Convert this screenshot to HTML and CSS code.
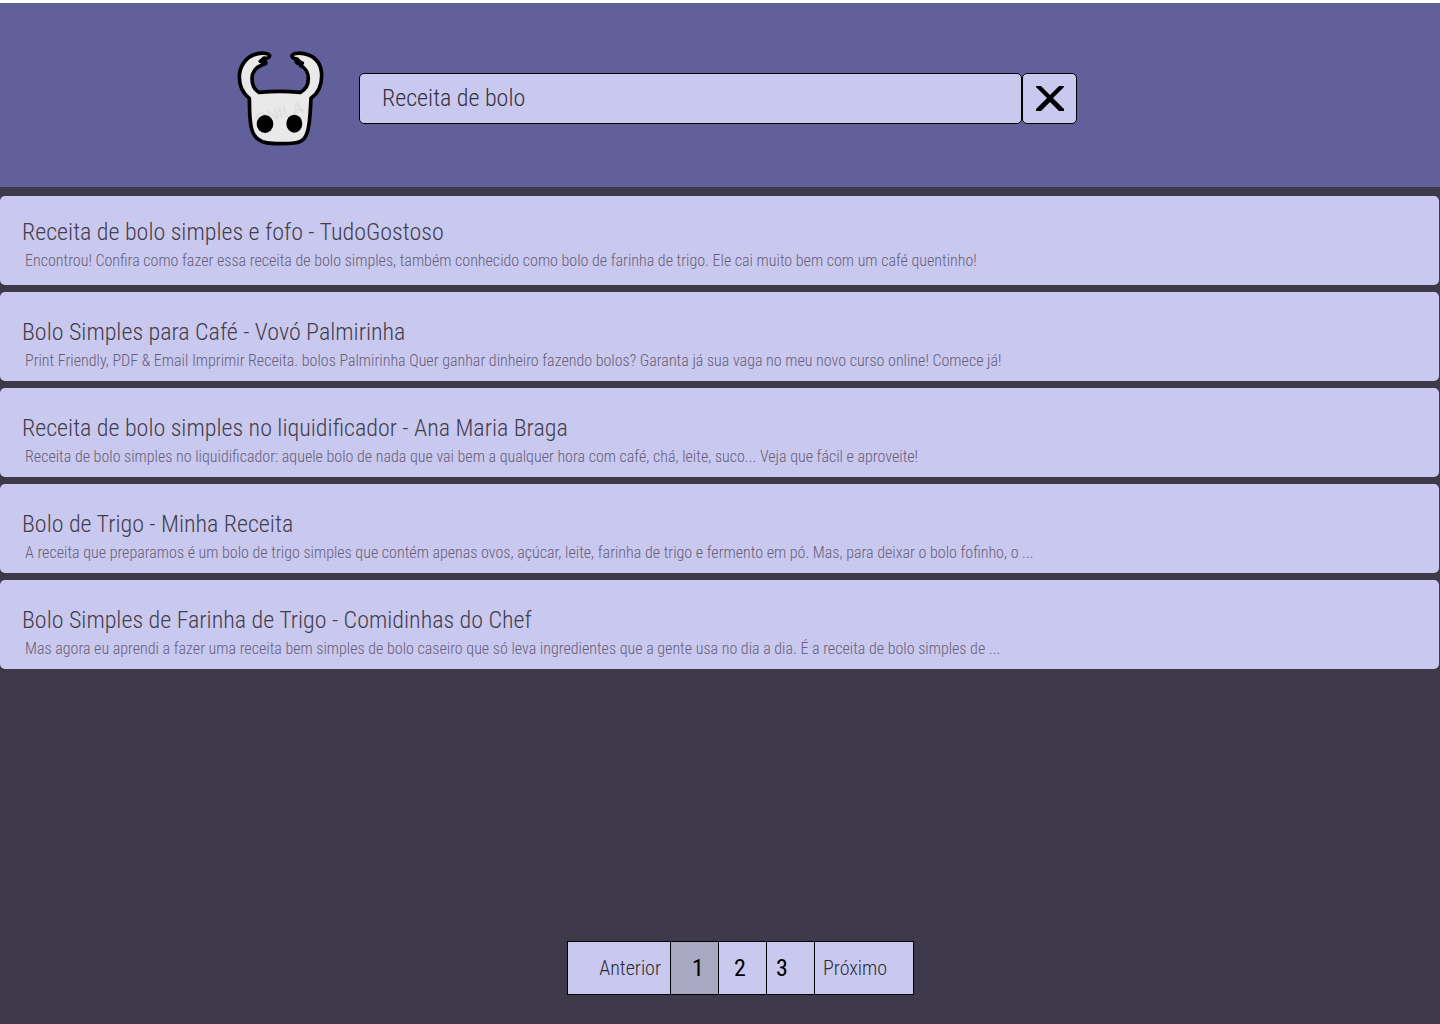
FILE: index.html
```html
<!DOCTYPE html>
<html lang="pt-BR">
<head>
<meta charset="utf-8">
<meta name="viewport" content="width=device-width, initial-scale=1">
<title>Receita de bolo</title>
<link rel="stylesheet" href="styles.css">
</head>
<body>
<header class="header">
  <svg class="logo" viewBox="48 27 264 291" role="img" aria-label="Logo">
    <path class="logo-shape" d="M149 44C146 35 119 34 100 42C76 52 58 77 58 108C58 135 70 158 88 172L89 215C91 252 94 278 112 293C128 307 151 308 181 308C212 308 238 308 252 293C267 277 270 234 273 172C294 157 305 134 305 105C305 75 291 52 266 42C245 34 219 35 216 44C215 50 224 54 232 54C225 57 228 63 233 67L247 66L242 74C257 80 265 97 265 113C265 131 255 146 241 154Q180 148 117 154C103 146 96 131 96 112C96 94 108 80 120 75L138 67L135 60L121 61L133 51C140 53 149 50 149 44Z"/>
    <path d="M115 60L131 49L147 48L137 55L136 65L122 73L126 64ZM217 48L235 51L249 64L248 72L231 68L229 58Z"/>
    <text class="logo-mark" x="110" y="252" transform="rotate(-15 110 252)">ONILA</text>
    <ellipse cx="135" cy="249" rx="25" ry="27"/>
    <ellipse cx="223" cy="248" rx="24" ry="27"/>
  </svg>
  <form class="search" role="search">
    <input class="search-input" type="text" aria-label="Pesquisar" value="Receita de bolo">
    <button class="search-clear" type="button" aria-label="Limpar">
      <svg class="clear-icon" viewBox="0 0 28 25" aria-hidden="true"><path d="M0 0H5L14 9L23 0H28V1L17 12L28 23V25H23L14 16L5 25H0V23L11 12L0 1Z"/></svg>
    </button>
  </form>
</header>
<main class="results">
  <article class="result">
    <h2 class="result-title">Receita de bolo simples e fofo - TudoGostoso</h2>
    <p class="result-text">Encontrou! Confira como fazer essa receita de bolo simples, também conhecido como bolo de farinha de trigo. Ele cai muito bem com um café quentinho!</p>
  </article>
  <article class="result">
    <h2 class="result-title">Bolo Simples para Café - Vovó Palmirinha</h2>
    <p class="result-text">Print Friendly, PDF &amp; Email Imprimir Receita. bolos Palmirinha Quer ganhar dinheiro fazendo bolos? Garanta já sua vaga no meu novo curso online! Comece já!</p>
  </article>
  <article class="result">
    <h2 class="result-title">Receita de bolo simples no liquidificador - Ana Maria Braga</h2>
    <p class="result-text">Receita de bolo simples no liquidificador: aquele bolo de nada que vai bem a qualquer hora com café, chá, leite, suco... Veja que fácil e aproveite!</p>
  </article>
  <article class="result">
    <h2 class="result-title">Bolo de Trigo - Minha Receita</h2>
    <p class="result-text">A receita que preparamos é um bolo de trigo simples que contém apenas ovos, açúcar, leite, farinha de trigo e fermento em pó. Mas, para deixar o bolo fofinho, o ...</p>
  </article>
  <article class="result">
    <h2 class="result-title">Bolo Simples de Farinha de Trigo - Comidinhas do Chef</h2>
    <p class="result-text">Mas agora eu aprendi a fazer uma receita bem simples de bolo caseiro que só leva ingredientes que a gente usa no dia a dia. É a receita de bolo simples de ...</p>
  </article>
</main>
<nav class="pages" aria-label="Paginação">
  <button class="page page-prev" type="button">Anterior</button>
  <button class="page page-number page-current" type="button" aria-current="page">1</button>
  <button class="page page-number page-second" type="button">2</button>
  <button class="page page-number page-third" type="button">3</button>
  <button class="page page-next" type="button">Próximo</button>
</nav>
</body>
</html>
```

FILE: styles.css
```css
* {
  box-sizing: border-box;
}

body {
  margin: 0;
  min-height: 100vh;
  display: flex;
  flex-direction: column;
  border-top: 3px solid #fff;
  background: #3f394c;
  font-family: "Roboto Condensed", "Liberation Sans Narrow", Roboto, sans-serif;
  font-weight: 300;
}

button,
input {
  font: inherit;
  margin: 0;
}

.header {
  min-height: 184px;
  display: flex;
  align-items: center;
  gap: 35px;
  padding: 6px 24px 0 236px;
  background: #62609a;
}

.logo {
  flex: none;
  width: 88px;
  height: 97px;
}

.logo-shape {
  fill: #e9e9e9;
  stroke: #000;
  stroke-width: 11;
  stroke-linejoin: round;
}

.logo-mark {
  font: bold 48px "Liberation Sans", sans-serif;
  fill: #dfdfdf;
}

.search {
  flex: 0 1 718px;
  min-width: 0;
  display: flex;
}

.search-input,
.search-clear {
  height: 51px;
  border: 1px solid #000;
  border-radius: 5px;
  background: #c9c8ee;
}

.search-input {
  flex: 1;
  min-width: 0;
  padding: 0 22px;
  color: #34323f;
  font-size: 24px;
}

.search-clear {
  width: 55px;
  display: flex;
  align-items: center;
  justify-content: center;
  padding: 0;
}

.clear-icon {
  width: 28px;
  height: 25px;
}

.results {
  display: flex;
  flex-direction: column;
  gap: 7px;
  padding: 9px 1px 24px 0;
}

.result {
  min-height: 89px;
  padding: 25px 22px 0;
  border-radius: 5px;
  background: #c9c8ee;
}

.result:first-child {
  padding-top: 21px;
}

.result-title {
  margin: 0;
  color: #433e4d;
  font-size: 24px;
  font-weight: 300;
  line-height: 30px;
}

.result-text {
  margin: 4px 0 0 3px;
  color: #675e79;
  font-size: 16px;
  line-height: 20px;
}

.pages {
  display: flex;
  justify-content: center;
  margin-top: auto;
  padding: 0 0 29px 41px;
}

.page {
  height: 54px;
  padding: 0 9px;
  border: 1px solid #000;
  border-left-width: 0;
  background: #c9c8ee;
  color: #2c2a36;
  font-size: 20px;
  text-align: left;
}

.page-prev {
  width: 104px;
  border-left-width: 1px;
  text-align: right;
}

.page-number {
  width: 48px;
  color: #000;
  font-size: 24px;
  font-weight: 400;
}

.page-current {
  padding-left: 21px;
  background: #a9a8c3;
}

.page-second {
  padding-left: 15px;
}

.page-next {
  width: 99px;
  padding-left: 8px;
}
```
